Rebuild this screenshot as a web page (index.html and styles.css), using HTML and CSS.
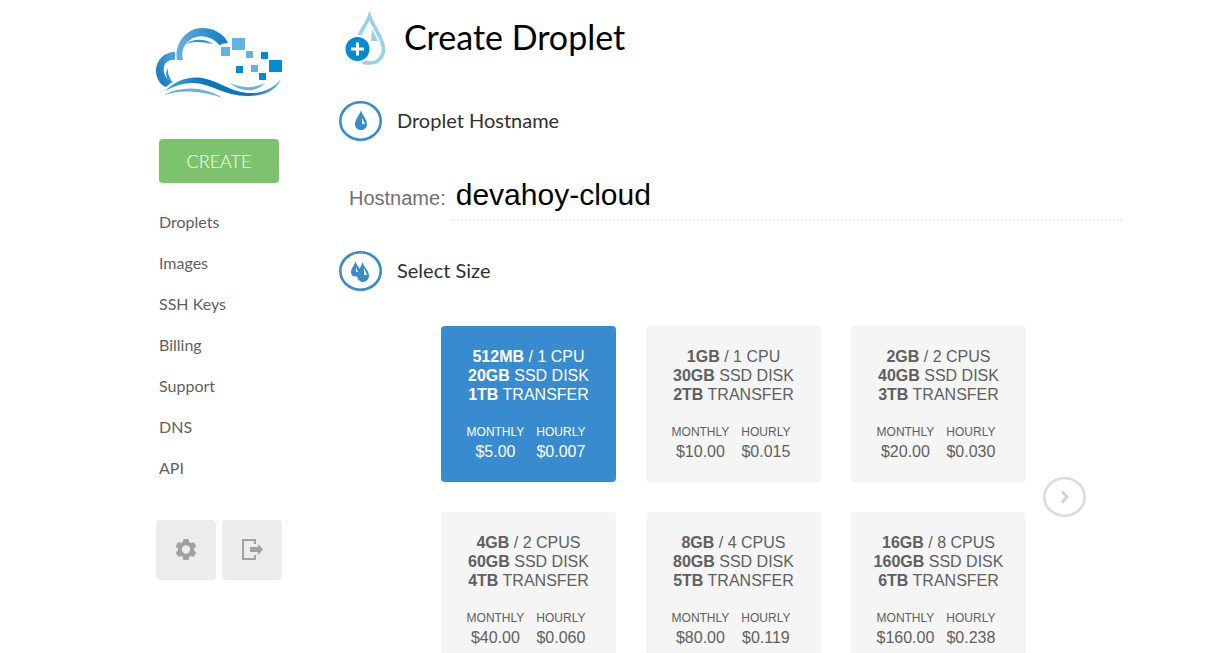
FILE: index.html
```html
<!DOCTYPE html>
<html lang="en">
<head>
<meta charset="utf-8">
<meta name="viewport" content="width=device-width, initial-scale=1">
<title>Create Droplet</title>
<link rel="stylesheet" href="styles.css">
</head>
<body>
<div class="page">
  <aside class="sidebar">
    <a class="logo" href="#" aria-label="Home">
      <svg width="128" height="72" viewBox="1 1 128 72" aria-hidden="true">
        <defs>
          <linearGradient id="arc" x1="0" x2="1" y1="0" y2="0"><stop offset="0" stop-color="#64b1e4"/><stop offset="1" stop-color="#0a7cc2"/></linearGradient>
          <linearGradient id="side" x1="0" x2="1" y1="1" y2="0"><stop offset="0" stop-color="#0a76bb"/><stop offset="1" stop-color="#4ea5dd"/></linearGradient>
          <linearGradient id="wave" x1="0" x2="1" y1="0" y2="0"><stop offset="0" stop-color="#4aa2da"/><stop offset=".35" stop-color="#0a76bb"/><stop offset=".75" stop-color="#0a76bb"/><stop offset="1" stop-color="#64b1e4"/></linearGradient>
        </defs>
        <path fill="url(#arc)" d="M22 34C19 18 31 2 47 2C59 2 69 8 73 17L66 18L65 20C58 10 44 7 35 14C28 19 26 26 28 34Z"/>
        <path fill="#2a91d2" d="M31 18C39 12 51 13 58 18C48 16 39 15 31 18Z"/>
        <path fill="url(#side)" d="M20 26C6 26-2 39 2 51C4 57 8 60 11 61L17 56C9 52 7 44 10 38C12 35 16 33 20 34Z"/>
        <path fill="#2a91d2" d="M13 42C9 49 12 54 18 57C15 52 12 48 13 42Z"/>
        <path fill="url(#wave)" d="M10 65C20 55 33 50 47 52C65 55 77 68 99 67C111 66 121 60 126 53C121 65 109 70 93 70C69 70 55 57 38 57C26 57 18 61 10 65Z"/>
        <path fill="#64b1e4" d="M9 69C27 59 50 61 68 72C48 65 29 63 9 69ZM75 57C86 62 97 63 110 57C101 67 85 66 75 57Z"/>
        <path fill="#64b1e4" d="M66 21h9v9h-9zM77 12h13v12H77zM91 25h7v7h-7zM96 39h7v7h-7z"/>
        <path fill="#0589d2" d="M106 26h7v7h-7zM114 34h13v12h-13zM81 40h7v7h-7zM104 47h7v7h-7z"/>
      </svg>
    </a>
    <a class="create" href="#">CREATE</a>
    <nav class="nav">
      <a href="#">Droplets</a>
      <a href="#">Images</a>
      <a href="#">SSH Keys</a>
      <a href="#">Billing</a>
      <a href="#">Support</a>
      <a href="#">DNS</a>
      <a href="#">API</a>
    </nav>
    <div class="tools">
      <button type="button" class="tool" aria-label="Settings">
        <svg width="20" height="22" viewBox="0 0 20 22" aria-hidden="true"><circle cx="10" cy="10.500" r="6.200" fill="none" stroke="#a1a1a1" stroke-width="4"/><g fill="#a1a1a1"><path d="M7 1.500q0-1.500 1.500-1.500h3q1.500 0 1.500 1.500V4H7zM7 17v2.500q0 1.500 1.500 1.500h3q1.500 0 1.500-1.500V17z"/><path transform="rotate(60 10 10.500)" d="M7 1.500q0-1.500 1.500-1.500h3q1.500 0 1.500 1.500V4H7zM7 17v2.500q0 1.500 1.500 1.500h3q1.500 0 1.500-1.500V17z"/><path transform="rotate(-60 10 10.500)" d="M7 1.500q0-1.500 1.500-1.500h3q1.500 0 1.500 1.500V4H7zM7 17v2.500q0 1.500 1.500 1.500h3q1.500 0 1.500-1.500V17z"/></g></svg>
      </button>
      <button type="button" class="tool" aria-label="Log out">
        <svg width="21" height="22" viewBox="0 0 21 22" aria-hidden="true"><path fill="#a1a1a1" d="M0 0h14v5h-2V2H2v17h10v-3h2v5H0zM8 8h8V5l5 5.500-5 5.500v-3H8z"/></svg>
      </button>
    </div>
  </aside>

  <main class="main">
    <header class="title">
      <svg width="42" height="54" viewBox="0 0 42 54" aria-hidden="true">
        <path fill="none" stroke="#96d0ec" stroke-width="3.600" d="M24.500 4C21 14 10 26 10 36C10 45 16 51 24.500 51S38.500 45 38.500 36.500C38.500 28 28 14 24.500 4Z"/>
        <path fill="#96d0ec" d="M27 17l6 12h-7z"/>
        <circle cx="12.500" cy="37" r="14" fill="#fff"/>
        <circle cx="12.500" cy="37" r="12" fill="#0589d2"/>
        <path stroke="#fff" stroke-width="3" d="M12.500 30.500v13M6 37h13"/>
      </svg>
      <h1>Create Droplet</h1>
    </header>

    <section>
      <div class="heading">
        <svg width="43" height="40" viewBox="0 0 43 40" aria-hidden="true"><ellipse cx="21.500" cy="20" rx="20.200" ry="18.700" fill="none" stroke="#398bcf" stroke-width="2.600"/><path fill="#398bcf" d="M22 9C23 14 28 18 28 23C28 27 25 29 22 29S16 27 16 23C16 18 21 14 22 9Z"/><path fill="#fff" d="M23 17l3 6h-3z"/></svg>
        <h2>Droplet Hostname</h2>
      </div>
      <div class="hostname">
        <label for="hostname">Hostname:</label>
        <input id="hostname" type="text" value="devahoy-cloud">
      </div>
    </section>

    <section>
      <div class="heading">
        <svg width="43" height="40" viewBox="0 0 43 40" aria-hidden="true"><ellipse cx="21.500" cy="20" rx="20.200" ry="18.700" fill="none" stroke="#398bcf" stroke-width="2.600"/><path fill="#398bcf" d="M16.500 10C17 14 21.500 17 21.500 21C21.500 24 19.500 25.500 16.500 25.500S12 24 12 21C12 17 16 14 16.500 10Z"/><path fill="#398bcf" d="M23.500 11C24.500 16 30 19.500 30 24.500C30 28.500 27 31 24 31S18 28.500 18 24.500C18 19.500 22.500 16 23.500 11Z"/><path fill="#fff" d="M25 17l3 7h-3zM17 16l2 5h-2z"/></svg>
        <h2>Select Size</h2>
      </div>
      <div class="sizes">
        <div class="grid">
          <button type="button" class="card selected" aria-pressed="true">
            <span class="specs"><b>512MB</b> / 1 CPU<br><b>20GB</b> SSD DISK<br><b>1TB</b> TRANSFER</span>
            <span class="prices"><span><small>MONTHLY</small>$5.00</span><span><small>HOURLY</small>$0.007</span></span>
          </button>
          <button type="button" class="card" aria-pressed="false">
            <span class="specs"><b>1GB</b> / 1 CPU<br><b>30GB</b> SSD DISK<br><b>2TB</b> TRANSFER</span>
            <span class="prices"><span><small>MONTHLY</small>$10.00</span><span><small>HOURLY</small>$0.015</span></span>
          </button>
          <button type="button" class="card" aria-pressed="false">
            <span class="specs"><b>2GB</b> / 2 CPUS<br><b>40GB</b> SSD DISK<br><b>3TB</b> TRANSFER</span>
            <span class="prices"><span><small>MONTHLY</small>$20.00</span><span><small>HOURLY</small>$0.030</span></span>
          </button>
          <button type="button" class="card" aria-pressed="false">
            <span class="specs"><b>4GB</b> / 2 CPUS<br><b>60GB</b> SSD DISK<br><b>4TB</b> TRANSFER</span>
            <span class="prices"><span><small>MONTHLY</small>$40.00</span><span><small>HOURLY</small>$0.060</span></span>
          </button>
          <button type="button" class="card" aria-pressed="false">
            <span class="specs"><b>8GB</b> / 4 CPUS<br><b>80GB</b> SSD DISK<br><b>5TB</b> TRANSFER</span>
            <span class="prices"><span><small>MONTHLY</small>$80.00</span><span><small>HOURLY</small>$0.119</span></span>
          </button>
          <button type="button" class="card" aria-pressed="false">
            <span class="specs"><b>16GB</b> / 8 CPUS<br><b>160GB</b> SSD DISK<br><b>6TB</b> TRANSFER</span>
            <span class="prices"><span><small>MONTHLY</small>$160.00</span><span><small>HOURLY</small>$0.238</span></span>
          </button>
        </div>
        <button type="button" class="next" aria-label="More sizes">
          <svg width="43" height="40" viewBox="0 0 43 40" aria-hidden="true"><ellipse cx="21.500" cy="20" rx="20.200" ry="18.700" fill="none" stroke="#dcdcdc" stroke-width="2.600"/><path fill="none" stroke="#d3d3d3" stroke-width="3" d="M19 14.500l5 5.500-5 5.500"/></svg>
        </button>
      </div>
    </section>
  </main>
</div>
</body>
</html>
```
FILE: styles.css
```css
* { box-sizing: border-box; }

body {
  margin: 0;
  background: #fff;
  color: #606060;
  font: 16px/19px "Liberation Sans", Arial, sans-serif;
}

svg { display: block; flex: none; }
a { color: inherit; text-decoration: none; }
h1, h2 { margin: 0; font-family: Lato, sans-serif; font-weight: 400; }

button {
  border: 0;
  padding: 0;
  background: none;
  color: inherit;
  font: inherit;
  cursor: pointer;
}

.page {
  display: flex;
  gap: 57px;
  padding: 0 106px 0 156px;
}

/* Sidebar */
.sidebar {
  flex: none;
  width: 126px;
  padding-top: 27px;
  font-family: Lato, sans-serif;
}

.logo { display: block; }

.create {
  display: block;
  margin: 40px 3px 0;
  border-radius: 4px;
  background: #7dc36e;
  color: #fff;
  font-size: 18px;
  font-weight: 300;
  line-height: 44px;
  text-align: center;
}

.nav {
  display: flex;
  flex-direction: column;
  gap: 21px;
  padding: 29px 3px 0;
  font-size: 16px;
  line-height: 20px;
}

.tools {
  display: flex;
  gap: 6px;
  margin-top: 42px;
}

.tool {
  display: grid;
  place-items: center;
  width: 60px;
  height: 60px;
  border-radius: 4px;
  background: #ececec;
}

/* Main column */
.main {
  flex: 1;
  min-width: 0;
  padding-top: 12px;
}

.title {
  display: flex;
  align-items: flex-start;
  gap: 17px;
  padding-left: 6px;
  color: #000;
}

.title h1 { font-size: 34px; line-height: 50px; }

.heading {
  display: flex;
  align-items: flex-start;
  gap: 15px;
  margin-top: 35px;
  color: #303030;
}

.heading h2 { font-size: 20px; line-height: 38px; }

.hostname {
  display: flex;
  align-items: baseline;
  gap: 4px;
  margin: 29px 0 -5px;
  padding-left: 10px;
  color: #707070;
  font-size: 20px;
}

.hostname input {
  flex: 1;
  min-width: 0;
  height: 51px;
  padding: 0 6px;
  border: 0;
  border-bottom: 2px dotted #f0f0f0;
  background: none;
  color: #000;
  font: 30px "Liberation Sans", Arial, sans-serif;
}

/* Size picker */
.sizes {
  display: flex;
  align-items: center;
  gap: 17px;
  padding: 35px 36px 0 102px;
}

.grid {
  flex: 1;
  display: grid;
  grid-template-columns: repeat(3, 1fr);
  gap: 30px;
}

.card {
  display: flex;
  flex-direction: column;
  align-items: center;
  gap: 19px;
  padding: 21px 0;
  border-radius: 4px;
  background: #f5f5f5;
}

.card.selected { background: #398bcf; color: #fff; }

.prices {
  display: flex;
  gap: 12px;
  padding-right: 5px;
}

.prices > span {
  display: flex;
  flex-direction: column;
  align-items: center;
}

.prices small { font-size: 12px; }
```
